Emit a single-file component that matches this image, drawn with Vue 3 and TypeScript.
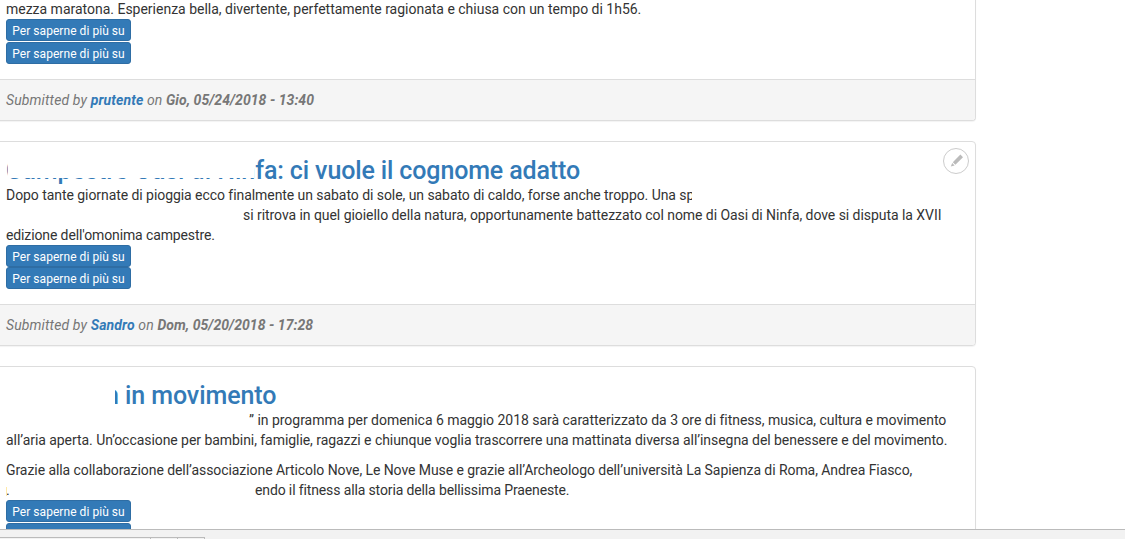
<script setup lang="ts">
const more = 'Per saperne di più su'
</script>

<template>
  <div class="page">
    <main class="list">
      <article class="card first">
        <div class="body">
          <p class="line s1">mezza maratona. Esperienza bella, divertente, perfettamente ragionata e chiusa con un tempo di 1h56.</p>
          <a class="btn">{{ more }}</a>
          <a class="btn">{{ more }}</a>
        </div>
        <footer class="foot">Submitted by <b class="user">prutente</b> on <b class="date">Gio, 05/24/2018 - 13:40</b></footer>
      </article>

      <article class="card tight">
        <span class="edit">
          <svg width="16" height="16" viewBox="0 0 16 16"><path d="M12.4 1.6 15 4.2 7.4 11.8 4.8 9.2Z M4.2 10 6.6 12.4 2.8 13.4Z" fill="#bbb" /></svg>
        </span>
        <div class="body">
          <h2 class="title">Campestre Oasi di Nin<span class="t2">fa: ci vuole il cognome adatto</span></h2>
          <div class="text">
            <span class="s2">Dopo tante giornate di pioggia ecco finalmente un sabato di sole, un sabato di caldo, forse anche troppo. Una splendida</span><br />
            <span class="indent a s3">si ritrova in quel gioiello della natura, opportunamente battezzato col nome di Oasi di Ninfa, dove si disputa la XVII</span><br />
            <span class="s4">edizione dell'omonima campestre.</span>
          </div>
          <a class="btn">{{ more }}</a>
          <a class="btn">{{ more }}</a>
        </div>
        <i class="mask m1"></i>
        <i class="mask m2"></i>
        <footer class="foot">Submitted by <b class="user">Sandro</b> on <b class="date">Dom, 05/20/2018 - 17:28</b></footer>
      </article>

      <article class="card last">
        <div class="body">
          <h2 class="title"><span class="indent b t3">n in movimento</span></h2>
          <p class="line"><span class="indent c s5">” in programma per domenica 6 maggio 2018 sarà caratterizzato da 3 ore di fitness, musica, cultura e movimento</span><br /><span class="s3">all’aria aperta. Un’occasione per bambini, famiglie, ragazzi e chiunque voglia trascorrere una mattinata diversa all’insegna del benessere e del movimento.</span></p>
          <p class="line para"><span class="s6">Grazie alla collaborazione dell’associazione Articolo Nove, Le Nove Muse e grazie all’Archeologo dell’università La Sapienza di Roma, Andrea Fiasco,</span><br /><span class="indent d">.</span><span class="s7">endo il fitness alla storia della bellissima Praeneste.</span></p>
          <a class="btn">{{ more }}</a>
          <a class="btn">{{ more }}</a>
        </div>
        <i class="mask m3"></i>
        <i class="tick"></i>
      </article>
    </main>
    <div class="bar"><span class="tab wide"></span><span class="tab"></span><span class="tab"></span></div>
  </div>
</template>

<style>
html, body { margin: 0; overflow: hidden; background: #fff; }
</style>

<style scoped>
.page { position: relative; width: 1125px; height: 539px; overflow: hidden; font: 14px/20px Roboto, sans-serif; color: #333; }
.list { display: flex; flex-direction: column; gap: 20px; width: 987px; margin-left: -11px; }
.card { position: relative; background: #fff; border: 1px solid #ddd; border-radius: 4px; box-shadow: 0 1px 1px rgba(0,0,0,.05); flex: none; }
.first { margin-top: -10px; border-top: 0; }
.last { height: 300px; }
.body { padding: 15px 16px 14px; }
.first .body { padding-top: 9px; }
.line { margin: 0; }
.para { margin-top: 10px; }
.btn { display: block; box-sizing: border-box; width: 125px; height: 22px; margin-bottom: 1px; padding-top: 1px; background: #337ab7; border: 1px solid #2e6da4; border-radius: 3px; color: #fff; font-size: 12px; line-height: 20px; text-align: center; letter-spacing: .05px; white-space: nowrap; }
.tight .body { padding-bottom: 15px; }
.tight .btn { margin-bottom: 0; }
.title { margin: 0; font-size: 25px; line-height: 28px; font-weight: 500; color: #337ab7; white-space: nowrap; }
.t2 { letter-spacing: -.13px; }
.t3 { letter-spacing: -.08px; }
.indent { display: inline-block; white-space: nowrap; }
.a { padding-left: 237px; }
.b { padding-left: 99px; }
.c { padding-left: 243px; }
.d { width: 249px; }
.s1 { letter-spacing: -.01px; }
.s2 { letter-spacing: -.06px; }
.s3 { letter-spacing: -.055px; }
.s4 { letter-spacing: -.12px; }
.s5 { letter-spacing: -.03px; }
.s6 { letter-spacing: -.068px; }
.s7 { letter-spacing: -.13px; }
.foot { background: #f5f5f5; border-top: 1px solid #ddd; border-radius: 0 0 3px 3px; padding: 10px 16px; color: #777; font-style: italic; letter-spacing: .13px; }
.date { letter-spacing: .04px; }
.user { color: #337ab7; }
.edit { position: absolute; top: 6px; right: 6px; width: 24px; height: 24px; border: 1px solid #ccc; border-radius: 50%; display: flex; align-items: center; justify-content: center; background: #fff; }
.mask { position: absolute; background: #fff; }
.m1 { left: 18px; top: 8px; width: 246px; height: 28px; }
.m2 { left: 702px; top: 43px; width: 90px; height: 20px; }
.m3 { left: 100px; top: 10px; width: 25px; height: 30px; }
.tick { position: absolute; left: 16px; top: 120px; width: 1px; height: 9px; background: #ffe9a8; }
.bar { position: absolute; left: 0; right: 0; top: 529px; height: 10px; background: #f2f2f2; border-top: 1px solid #bbb; box-sizing: border-box; display: flex; padding-top: 7px; }
.tab { box-sizing: border-box; width: 27px; height: 12px; border-top: 1px solid #bbb; border-right: 1px solid #bbb; flex: none; }
.wide { width: 151px; }
</style>
